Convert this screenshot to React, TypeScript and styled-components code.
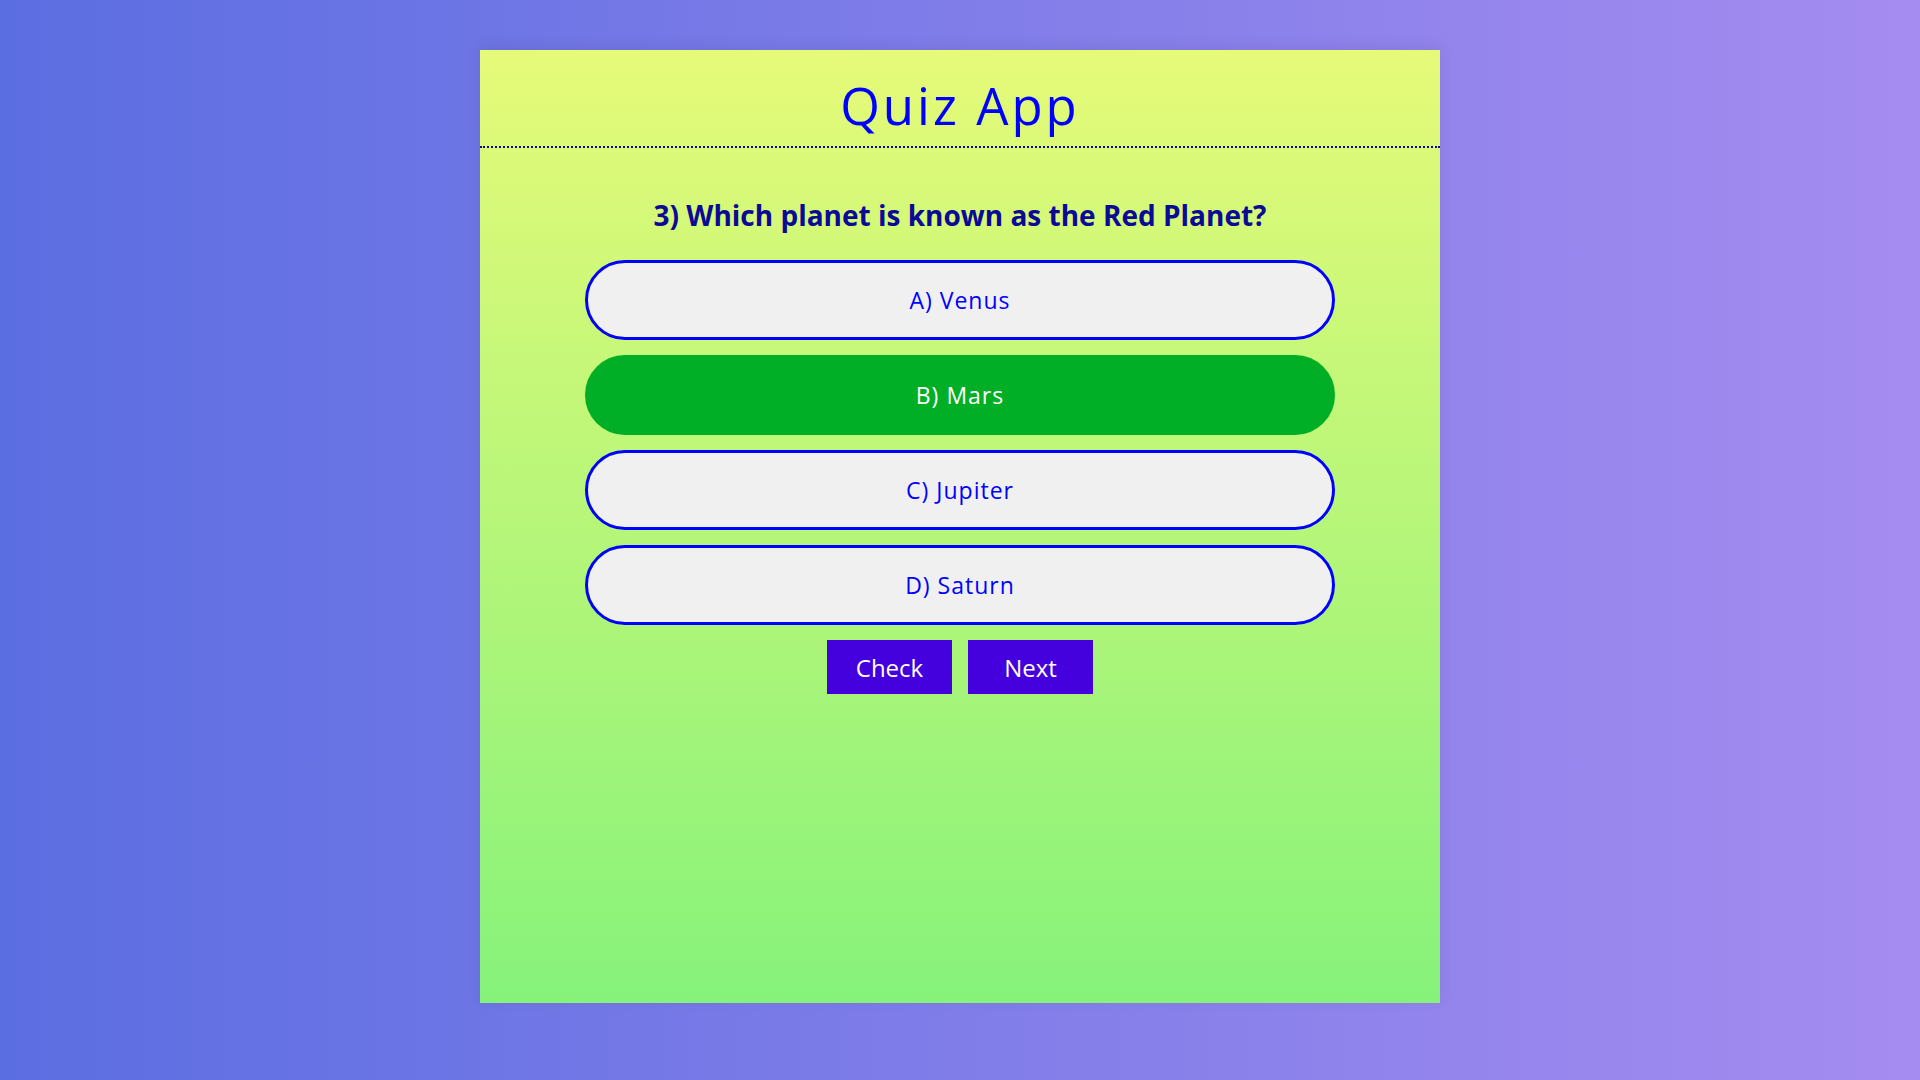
import styled, { createGlobalStyle } from 'styled-components'

const GlobalStyle = createGlobalStyle`
    * {
        box-sizing: border-box;
    }
    body {
        margin: 0;
        min-height: 100vh;
        font-family: 'Open Sans', 'Liberation Sans', sans-serif;
        background: linear-gradient(to right, #5b6ee1, #a58cf0);
    }
`

const Page = styled.div`
    display: flex;
    justify-content: center;
    padding: 50px 0 77px;
`

const Card = styled.div`
    width: 960px;
    height: 953px;
    display: flex;
    flex-direction: column;
    align-items: center;
    background: linear-gradient(to bottom, #e6fa78, #86f27a);
    box-shadow: 0 -4px 12px rgba(60, 60, 120, 0.12);
`

const Header = styled.header`
    width: 100%;
    height: 98px;
    display: flex;
    align-items: center;
    justify-content: center;
    border-bottom: 2px dotted #0a0a8c;
`

const Title = styled.h1`
    margin: 14px 0 0;
    font-size: 51px;
    font-weight: 500;
    letter-spacing: 3px;
    color: #0000ff;
`

const Question = styled.h2`
    margin: 47px 0 25px;
    font-size: 28px;
    font-weight: 700;
    line-height: 40px;
    color: #0a0a96;
`

const Options = styled.div`
    display: flex;
    flex-direction: column;
    gap: 15px;
    width: 750px;
`

const Option = styled.button<{ $selected?: boolean }>`
    height: 80px;
    width: 100%;
    border-radius: 40px;
    border: 3px solid ${(p) => (p.$selected ? '#00af26' : '#0000ff')};
    background: ${(p) => (p.$selected ? '#00af26' : '#f0f0f0')};
    color: ${(p) => (p.$selected ? '#ffffff' : '#0000ff')};
    font-family: inherit;
    font-size: 23px;
    font-weight: 400;
    letter-spacing: 1px;
    cursor: pointer;
`

const Actions = styled.div`
    display: flex;
    gap: 16px;
    margin-top: 15px;
`

const ActionButton = styled.button`
    width: 125px;
    height: 54px;
    border: none;
    background: #4400dd;
    color: #ffffff;
    font-family: inherit;
    font-size: 24px;
    font-weight: 500;
    cursor: pointer;
`

const options = ['A) Venus', 'B) Mars', 'C) Jupiter', 'D) Saturn']

const App = () => {
    return (
        <>
            <GlobalStyle />
            <Page>
                <Card>
                    <Header>
                        <Title>Quiz App</Title>
                    </Header>
                    <Question>3) Which planet is known as the Red Planet?</Question>
                    <Options>
                        {options.map((o, i) => (
                            <Option key={o} $selected={i === 1}>
                                {o}
                            </Option>
                        ))}
                    </Options>
                    <Actions>
                        <ActionButton>Check</ActionButton>
                        <ActionButton>Next</ActionButton>
                    </Actions>
                </Card>
            </Page>
        </>
    )
}

export default App
